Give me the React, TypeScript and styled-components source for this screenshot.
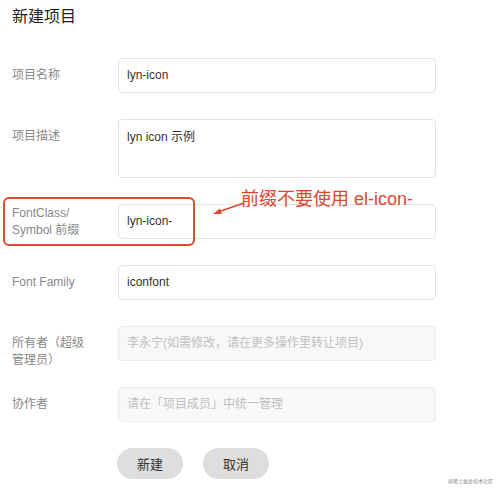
import styled, { createGlobalStyle } from 'styled-components';

const GlobalStyle = createGlobalStyle`
    html, body {
        margin: 0;
        padding: 0;
        background: #fff;
    }
    body {
        font-family: "Liberation Sans", "Noto Sans CJK SC", sans-serif;
        color: #333;
    }
`;

const Page = styled.div`
    position: relative;
    width: 501px;
    height: 493px;
    padding: 7px 0 0 12px;
    box-sizing: border-box;
    overflow: hidden;
`;

const Title = styled.h2`
    margin: 0 0 31px;
    font-size: 16px;
    line-height: 20px;
    font-weight: normal;
    color: #222;
`;

const Form = styled.div`
    display: flex;
    flex-direction: column;
    gap: 26px;
`;

const Row = styled.div`
    position: relative;
    display: grid;
    grid-template-columns: 106px 318px;
`;

// labels hang from the top of the row; a second line may run past the input
const Label = styled.div<{ $center?: boolean }>`
    font-size: 12px;
    line-height: 17px;
    color: #888;
    padding-top: ${p => (p.$center ? '0' : '9px')};
    height: ${p => (p.$center ? 'auto' : '17px')};
    align-self: ${p => (p.$center ? 'center' : 'start')};
    white-space: pre-line;
`;

const Input = styled.div<{ $disabled?: boolean }>`
    height: 35px;
    box-sizing: border-box;
    border: 1px solid ${p => (p.$disabled ? '#ebebeb' : '#e4e4e4')};
    border-radius: 4px;
    background: ${p => (p.$disabled ? '#f8f8f8' : '#fff')};
    color: ${p => (p.$disabled ? '#c0c0c0' : '#333')};
    font-size: 12px;
    line-height: 33px;
    padding: 0 8px;
    white-space: nowrap;
`;

const TextArea = styled(Input)`
    height: 59px;
    line-height: 17px;
    padding-top: 9px;
`;

const Highlight = styled.div`
    position: absolute;
    left: -9px;
    top: -7px;
    width: 192px;
    height: 49px;
    box-sizing: border-box;
    border: 2px solid #dc4a30;
    border-radius: 6px;
    pointer-events: none;
`;

const Note = styled.div`
    position: absolute;
    left: 229px;
    top: -16px;
    font-size: 18px;
    line-height: 22px;
    color: #e0452e;
    white-space: nowrap;
`;

const Arrow = styled.svg`
    position: absolute;
    left: 186px;
    top: -4px;
`;

const Actions = styled.div`
    display: flex;
    gap: 20px;
    padding-left: 105px;
    margin-top: 26px;
`;

const Button = styled.button`
    width: 66px;
    height: 31px;
    border: none;
    border-radius: 16px;
    background: #dedede;
    color: #333;
    font-family: inherit;
    font-size: 13px;
    cursor: pointer;
`;

const Watermark = styled.div`
    position: absolute;
    right: 8px;
    bottom: 9px;
    font-size: 5px;
    color: #888;
`;

export default function App() {
    return (
        <Page>
            <GlobalStyle />
            <Title>新建项目</Title>
            <Form>
                <Row>
                    <Label>项目名称</Label>
                    <Input>lyn-icon</Input>
                </Row>
                <Row>
                    <Label>项目描述</Label>
                    <TextArea>lyn icon 示例</TextArea>
                </Row>
                <Row>
                    <Label $center>{'FontClass/\nSymbol 前缀'}</Label>
                    <Input>lyn-icon-</Input>
                    <Highlight />
                    <Arrow width="50" height="20" viewBox="0 0 50 20">
                        <line x1="46" y1="3" x2="20" y2="12" stroke="#dc4a30" strokeWidth="1.6" />
                        <polygon points="15,14 22,8.5 24,14" fill="#dc4a30" />
                    </Arrow>
                    <Note>前缀不要使用 el-icon-</Note>
                </Row>
                <Row>
                    <Label>Font Family</Label>
                    <Input>iconfont</Input>
                </Row>
                <Row>
                    <Label>{'所有者（超级\n管理员）'}</Label>
                    <Input $disabled>李永宁(如需修改，请在更多操作里转让项目)</Input>
                </Row>
                <Row>
                    <Label>协作者</Label>
                    <Input $disabled>请在「项目成员」中统一管理</Input>
                </Row>
            </Form>
            <Actions>
                <Button>新建</Button>
                <Button>取消</Button>
            </Actions>
            <Watermark>@稀土掘金技术社区</Watermark>
        </Page>
    );
}
